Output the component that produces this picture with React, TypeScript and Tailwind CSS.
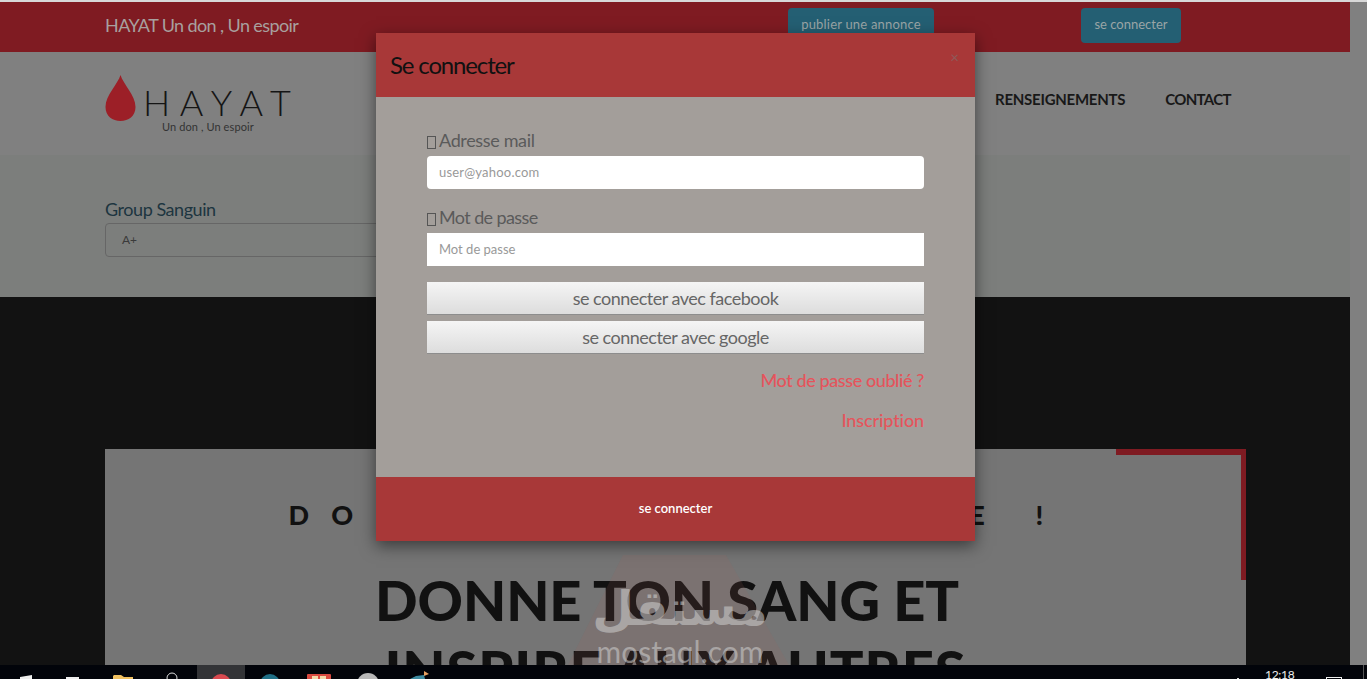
const sans = { fontFamily: '"Lato", "Noto Sans", sans-serif' };

function Tofu() {
  return <span className="mr-[3px] inline-block h-[13px] w-[9px] border border-[#555] align-[-2px]" />;
}

function Drop() {
  return (
    <svg width="31" height="47" viewBox="0 0 31 47" className="shrink-0">
      <path d="M15.5 0 C18 9 30.5 20 30.5 32 C30.5 41 23.5 46 15.5 46 C7.5 46 0.5 41 0.5 32 C0.5 20 13 9 15.5 0 Z" fill="#9c1f27" />
    </svg>
  );
}

function TopBar() {
  return (
    <div className="flex h-[50px] shrink-0 items-start bg-[#7f1b22] pt-[6px] pl-[105px] text-[#a8a09f]">
      <span className="w-[683px] text-[18px] leading-[34px] tracking-[-0.6px]">HAYAT Un don , Un espoir</span>
      <button className="h-[34px] w-[146px] rounded-[4px] bg-[#245f73] pb-[1px] text-[13px] tracking-[0.2px] text-[#9aa5a6]">publier une annonce</button>
      <button className="ml-[147px] h-[35px] w-[100px] rounded-[4px] bg-[#245f73] pb-[1px] text-[13px] text-[#9aa5a6]">se connecter</button>
    </div>
  );
}

function Header() {
  return (
    <div className="flex h-[103px] shrink-0 items-start bg-[#808080] pl-[105px]">
      <div className="mt-[23px] flex w-[890px] items-start gap-[7px]">
        <Drop />
        <div className="mt-[10px]">
          <div className="text-[36px] leading-[34px] font-light tracking-[9.6px] text-[#151515]">HAYAT</div>
          <div className="mt-[1px] ml-[19px] text-[11px] leading-[13px] tracking-[0.1px] text-[#333]">Un don , Un espoir</div>
        </div>
      </div>
      <nav className="mt-[36px] flex gap-[40px] text-[15px] font-bold text-[#181818]">
        <span className="tracking-[-0.25px]">RENSEIGNEMENTS</span>
        <span className="tracking-[-0.7px]">CONTACT</span>
      </nav>
    </div>
  );
}

function SearchBand() {
  return (
    <div className="h-[142px] shrink-0 bg-[#7c7e7c] pt-[42px] pl-[105px]">
      <label className="mb-[2px] block text-[18px] leading-[24px] tracking-[-0.45px] text-[#1d3540]">Group Sanguin</label>
      <div className="flex h-[34px] w-[400px] items-center rounded-[4px] border border-[#666] pl-[16px] text-[12px] text-[#3a3a3a]">A+</div>
    </div>
  );
}

function Hero() {
  return (
    <div className="min-h-0 flex-1 bg-[#121212] px-[105px] pt-[152px]">
      <div className="relative h-[300px] w-[1141px] bg-[#757575] text-center text-[#111]">
        <div className="absolute top-0 right-0 h-[6px] w-[130px] bg-[#7f1b22]" />
        <div className="absolute top-0 right-0 h-[131px] w-[5px] bg-[#7f1b22]" />
        <p className="pt-[48px] pl-[3px] text-[27px] leading-[36px] font-black tracking-[22.2px]">DONNE UN PEU DE VIE !</p>
        <h1 className="mt-[32px] text-[56px] leading-[70px] font-black">
          <span className="block pr-[17px] tracking-[-0.1px]">DONNE TON SANG ET</span>
          <span className="block tracking-[0.9px]">INSPIRE AUX AUTRES</span>
        </h1>
      </div>
    </div>
  );
}

function Modal() {
  return (
    <div className="absolute top-[33px] left-[376px] z-10 flex h-[508px] w-[599px] flex-col shadow-[0_5px_15px_rgba(0,0,0,0.5)]">
      <div className="flex h-[64px] shrink-0 items-center justify-between bg-[#a83838] pr-[16px] pl-[14px]">
        <h2 className="text-[24px] tracking-[-1.15px] text-[#111]">Se connecter</h2>
        <span className="mb-[16px] text-[15px] leading-none text-[#8f5a5a]">×</span>
      </div>
      <div className="flex-1 bg-[#a39e9a] px-[51px] pt-[32px] text-[18px] text-[#5a5a5a]">
        <label className="block h-[27px] leading-[23px] tracking-[-0.35px]"><Tofu />Adresse mail</label>
        <input className="block h-[33px] w-full rounded-[4px] bg-white px-[12px] pb-[1px] text-[13px] tracking-[0.2px] placeholder:text-[#999]" placeholder="user@yahoo.com" />
        <label className="mt-[17px] block h-[27px] leading-[23px] tracking-[-0.6px]"><Tofu />Mot de passe</label>
        <input className="block h-[33px] w-full bg-white px-[12px] pb-[1px] text-[13px] placeholder:text-[#999]" placeholder="Mot de passe" />
        <button className="mt-[16px] block h-[33px] w-full border-b border-[#8d8d8d] bg-gradient-to-b from-[#f5f5f5] to-[#dddddd] tracking-[-0.5px] text-[#666]">se connecter avec facebook</button>
        <button className="mt-[6px] block h-[33px] w-full border-b border-[#8d8d8d] bg-gradient-to-b from-[#f5f5f5] to-[#dddddd] tracking-[-0.5px] text-[#666]">se connecter avec google</button>
        <div className="mt-[14px] text-right font-medium text-[#e5545c]">
          <a className="block h-[40px] leading-[24px] tracking-[-0.4px]">Mot de passe oublié ?</a>
          <a className="block leading-[24px] tracking-[-0.1px]">Inscription</a>
        </div>
      </div>
      <div className="flex h-[64px] shrink-0 items-center justify-center bg-[#a83838] text-[13px] font-semibold text-white">se connecter</div>
    </div>
  );
}

function Taskbar() {
  return (
    <div className="relative z-20 flex h-[14px] shrink-0 items-start overflow-hidden bg-[#02040a]">
      <svg width="1367" height="14" viewBox="0 0 1367 14">
        <rect x="197" width="48" height="14" fill="#333437" />
        <path d="M20 12 L32 10 V14 H20 Z" fill="#eee" />
        <rect x="66" y="12" width="13" height="2" fill="#eee" />
        <path d="M113 11 V14 H133 V12 H124 L121 10 H114 Z" fill="#f0c060" />
        <circle cx="172" cy="13" r="5" fill="none" stroke="#ddd" strokeWidth="1" />
        <circle cx="221" cy="19" r="10" fill="#d94a50" />
        <circle cx="270" cy="19" r="10" fill="#1f6f86" />
        <rect x="307" y="9" width="24" height="8" rx="1" fill="#d94a40" />
        <rect x="312" y="11" width="6" height="3" fill="#f2d8a8" />
        <rect x="320" y="11" width="6" height="3" fill="#f2d8a8" />
        <circle cx="368" cy="19" r="11" fill="#b8b8b8" />
        <path d="M410 14 L416 11 L424 10 L425 14 Z" fill="#3d8aa0" />
        <path d="M424 6 L429 9 L424 11 Z" fill="#e8a060" />
        <rect x="1237" y="13" width="2" height="1" fill="#ddd" />
        <rect x="1326.5" y="12.5" width="15" height="4" fill="none" stroke="#eee" />
        <rect x="1363" y="0" width="1" height="14" fill="#555" />
      </svg>
      <span className="absolute top-[3px] left-[1265px] text-[12px] leading-[14px] tracking-[-0.3px] text-[#eee]">12:18</span>
    </div>
  );
}

function Watermark() {
  return (
    <div className="pointer-events-none absolute top-[553px] left-[560px] z-[15] h-[112px] w-[240px] overflow-hidden">
      <svg width="240" height="112" viewBox="0 0 240 112" className="absolute inset-0">
        <path d="M63 2 H166 L229 112 H8 Z" fill="#a3665c" fillOpacity="0.14" />
      </svg>
      <div className="relative flex flex-col items-center text-[#cfcfcf] opacity-55">
        <span className="mt-[24px] text-[48px] leading-[62px] font-bold" style={{ fontFamily: '"DejaVu Sans", sans-serif' }}>مستقل</span>
        <span className="-mt-[2px] text-[30px] leading-[28px]">mostaql.com</span>
      </div>
    </div>
  );
}

export default function App() {
  return (
    <div className="relative flex h-[679px] w-full flex-col overflow-hidden bg-[#808080]" style={sans}>
      <div className="h-[2px] shrink-0 bg-[#d8d8d8]" />
      <main className="flex min-h-0 w-[1350px] flex-1 flex-col">
        <TopBar />
        <Header />
        <SearchBand />
        <Hero />
      </main>
      <Taskbar />
      <Modal />
      <Watermark />
    </div>
  );
}
